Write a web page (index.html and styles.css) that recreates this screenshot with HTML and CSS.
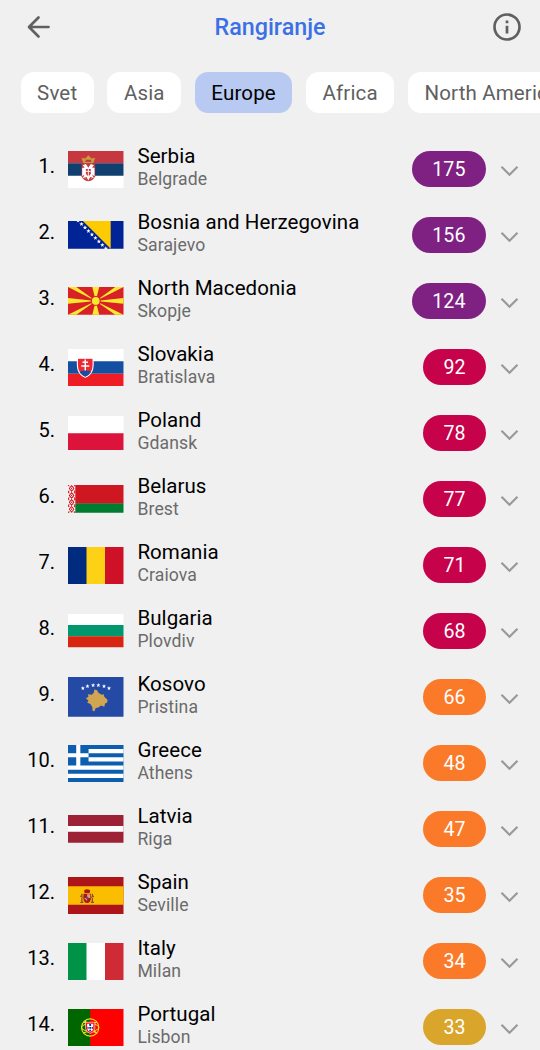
FILE: index.html
```html
<!DOCTYPE html>
<html lang="sr">

<head>
    <meta charset="UTF-8">
    <meta name="viewport" content="width=device-width, initial-scale=1.0">
    <title>Rangiranje</title>
    <link rel="stylesheet" href="styles.css">
</head>

<body>
    <!-- Header -->
    <header>
        <svg class="back" width="24" height="24" viewBox="0 0 24 24">
            <path d="M21.500 12H2.500M11.500 2.500L2 12L11.500 21.500" />
        </svg>
        <h1>Rangiranje</h1>
        <svg class="info" width="28" height="28" viewBox="0 0 28 28">
            <circle cx="14" cy="14" r="12.5" />
            <path d="M14 12.8V20.5M14 7.6V10.2" />
        </svg>
    </header>

    <!-- Continent Tabs -->
    <nav class="tabs">
        <a class="tab">Svet</a>
        <a class="tab">Asia</a>
        <a class="tab active">Europe</a>
        <a class="tab">Africa</a>
        <a class="tab">North America</a>
    </nav>

    <!-- Ranking List, filled by script.js -->
    <main class="ranking" id="ranking"></main>

    <script src="script.js"></script>
</body>

</html>
```

FILE: styles.css
```css
/* Global Styles */
body {
    font-family: Roboto, Arial, sans-serif;
    margin: 0;
    height: 1050px;
    overflow: hidden;
    background-color: #f0f0f0;
    color: #000;
}

/* Header Styles */
header {
    display: flex;
    justify-content: space-between;
    align-items: center;
    height: 53px;
    padding: 0 19px 0 27px;
}

header h1 {
    margin: 0;
    padding-right: 4px;
    font-size: 23.3px;
    font-weight: 500;
    color: #3b70e6;
}

header svg {
    fill: none;
    stroke: #606060;
    stroke-width: 2.7;
}

.back {
    stroke-linecap: round;
    stroke-linejoin: round;
}

/* Continent Tabs */
.tabs {
    display: flex;
    gap: 13.5px;
    padding: 19px 0 0 20.5px;
    overflow: hidden;
}

.tab {
    flex: none;
    height: 41px;
    padding: 0 16.6px;
    border-radius: 13px;
    background: white;
    color: #606060;
    font-size: 20.5px;
    line-height: 42px;
    letter-spacing: 0.15px;
}

.tab.active {
    background: #b8caf1;
    color: #000;
}

/* Ranking List */
.ranking {
    padding-top: 23px;
}

.row {
    display: flex;
    align-items: center;
    height: 66px;
    padding-right: 21px;
}

.place {
    width: 55px;
    padding-bottom: 7px;
    text-align: right;
    font-size: 20px;
}

.flag {
    width: 55.5px;
    margin-left: 13.3px;
}

.country {
    flex: 1;
    margin-left: 13.6px;
    padding-bottom: 4px;
}

.name {
    font-size: 20.5px;
    line-height: 23px;
    letter-spacing: 0.07px;
}

.city {
    color: #6b6b6b;
    font-size: 17.6px;
    line-height: 22px;
    letter-spacing: 0.12px;
}

.score {
    height: 36px;
    margin-bottom: 1px;
    padding: 0 20.6px;
    border-radius: 18px;
    color: white;
    font-size: 19.6px;
    line-height: 37px;
}

.purple {
    background: #7e2182;
}

.red {
    background: #c6024b;
}

.orange {
    background: #fb7a29;
}

.yellow {
    background: #daa52b;
}

.arrow {
    margin: 3px 0 0 14px;
    fill: none;
    stroke: #999;
    stroke-width: 2.2;
}
```

FILE: script.js
```javascript
// Flag artwork: width and height of the viewBox, then the shapes
const flags = {
    serbia: [90, 60, `<path fill="#fff" d="M0 0h90v60H0z"/><path fill="#c73740" d="M0 0h90v20H0z"/><path fill="#113f70" d="M0 20h90v20H0z"/>
        <path fill="#c99a38" d="M25 20l-3-9 6 1 5-5 5 5 6-1-3 9z"/><path fill="#c73740" d="M28 18l1-4h8l1 4z"/>
        <path fill="#c73740" d="M22 20h22v21q-3 7-11 8-8-1-11-8z"/>
        <path fill="#fff" d="M33 27l-4-6-5 2 3 4-4 0v14l4-3-3 6 6-2 3 6 3-6 6 2-3-6 4 3V27h-4l3-4-5-2z"/>
        <path fill="#c73740" d="M29 29h8v7q-1 4-4 5-3-1-4-5z"/><path stroke="#fff" stroke-width="1.5" d="M33 29v12M29 33h8"/>
        <path fill="#c99a38" d="M27 42l3 4-3-1zM39 42l-3 4 3-1z"/>`],
    bosnia: [80, 40, `<path fill="#002395" d="M0 0h80v40H0z"/><path fill="#fecb00" d="M21.5 0H61.5V40z"/>
        ${[0, 1, 2, 3, 4, 5, 6, 7, 8].map(i => star(14.5 + i * 5, -0.5 + i * 5, 3.3, '#fff')).join('')}`],
    macedonia: [80, 40, `<path fill="#d82126" d="M0 0h80v40H0z"/>
        <path fill="#f8e92e" d="M0 0h12l28 20L68 0h12L40 20l40 20H68L40 20 12 40H0l40-20zM35 0h10l-5 20zM35 40h10l-5-20zM0 16v8l40-4zM80 16v8l-40-4z"/>
        <circle cx="40" cy="20" r="6.4" fill="#f8e92e" stroke="#d82126" stroke-width="1.6"/>`],
    slovakia: [90, 60, `<path fill="#fff" d="M0 0h90v60H0z"/><path fill="#1350a1" d="M0 20h90v20H0z"/><path fill="#ee1c25" d="M0 40h90v20H0z"/>
        <path fill="#ee2733" stroke="#fff" stroke-width="1.8" d="M15.5 15h25q1 13-1 19-3 8-11.500 12-8.500-4-11.500-12-2-6-1-19z"/>
        <path fill="#1350a1" d="M19 38q2-4 5-2 4-5 8 0 3-2 5 2-3 4-9 7-6-3-9-7z"/>
        <path stroke="#fff" stroke-width="2.4" d="M28 17v18M23.500 21.500h9M21.500 27.500h13"/>`],
    poland: [80, 50, `<path fill="#fff" d="M0 0h80v25H0z"/><path fill="#dc143c" d="M0 25h80v25H0z"/>`],
    belarus: [80, 40, `<path fill="#ce1720" d="M0 0h80v27H0z"/><path fill="#007c30" d="M0 26.700h80V40H0z"/><path fill="#fff" d="M0 0h10.500v40H0z"/>
        ${[0, 10, 20, 30].map(y => `<path fill="none" stroke="#ce1720" stroke-width="1.500" d="M5.200 ${y + 1}l3.300 4-3.300 4-3.300-4zM0 ${y}l2 2M10.400 ${y}l-2 2M0 ${y + 10}l2-2M10.400 ${y + 10}l-2-2M5.200 ${y + 4}v2"/>`).join('')}`],
    romania: [90, 60, `<path fill="#002b7f" d="M0 0h31v60H0z"/><path fill="#fcd116" d="M30 0h31v60H30z"/><path fill="#ce1126" d="M60 0h30v60H60z"/>`],
    bulgaria: [100, 60, `<path fill="#fff" d="M0 0h100v20H0z"/><path fill="#00966e" d="M0 20h100v20H0z"/><path fill="#d62612" d="M0 40h100v20H0z"/>`],
    kosovo: [84, 60, `<path fill="#244aa5" d="M0 0h84v60H0z"/>
        ${[[22.5, 17], [29.500, 14], [38, 12.5], [46, 12.5], [54.500, 14], [62, 17]].map(p => star(p[0], p[1], 3.3, '#fff')).join('')}
        <path fill="#d0a650" d="M40 19l4 1 2 4 5 3 3-1 1 4 5 5-1 4-3 1-1 5-5-2-4 3-4 1-2 5-3-1 0-5-3-5-5-2 2-3-4-4 4-2-1-4 6 1 3-3z"/>`],
    greece: [81, 54, `<path fill="#0d5eaf" d="M0 0h81v54H0z"/><path stroke="#fff" stroke-width="6" d="M30 9h51M30 21h51M0 33h81M0 45h81M15 0v30M0 15h30"/>`],
    latvia: [80, 40, `<path fill="#9e2235" d="M0 0h80v40H0z"/><path fill="#fff" d="M0 16h80v8H0z"/>`],
    spain: [90, 60, `<path fill="#ad1519" d="M0 0h90v60H0z"/><path fill="#fabd00" d="M0 15h90v30H0z"/>
        <path fill="#ad1519" d="M26 22q5-4 10 0l-1 4h-8zM25 27h12v9q-1 6-6 6t-6-6z"/><path fill="#d9a27a" d="M31 28h5v6h-5zM26 34h5v5z"/>
        <circle cx="31" cy="34" r="2" fill="#5b4a91"/>
        <path fill="none" stroke="#8c4a2c" stroke-width="2" d="M22.500 27v14M39.500 27v14M20 31l5 2M37 33l5-2M20 41h5M37 41h5"/>`],
    italy: [90, 60, `<path fill="#009246" d="M0 0h31v60H0z"/><path fill="#fff" d="M30 0h31v60H30z"/><path fill="#ce2b37" d="M60 0h30v60H60z"/>`],
    portugal: [90, 60, `<path fill="#f00" d="M0 0h90v60H0z"/><path fill="#060" d="M0 0h36v60H0z"/>
        <g fill="none" stroke="#f5e61a" stroke-width="1.700"><circle cx="36" cy="30" r="14"/><ellipse cx="36" cy="30" rx="14" ry="6"/><path d="M25 21q12 6 22 0M25 39q11-6 22 0M27 19l20 21"/></g>
        <path fill="#f00" stroke="#fff" stroke-width="1" d="M28.500 21.500h15v10q-1 7-7.500 8-6.500-1-7.500-8z"/>
        <path fill="#fff" d="M31 24h10v8q-1 4-5 5-4-1-5-5z"/>
        <path fill="#039" d="M34.500 24.500h3v3h-3zM34.500 29h3v3h-3zM34.500 33.500h3v2.500h-3zM31.500 29h2v3h-2zM38.500 29h2v3h-2z"/>`]
};

const countries = [
    ['Serbia', 'Belgrade', 175, 'serbia'],
    ['Bosnia and Herzegovina', 'Sarajevo', 156, 'bosnia'],
    ['North Macedonia', 'Skopje', 124, 'macedonia'],
    ['Slovakia', 'Bratislava', 92, 'slovakia'],
    ['Poland', 'Gdansk', 78, 'poland'],
    ['Belarus', 'Brest', 77, 'belarus'],
    ['Romania', 'Craiova', 71, 'romania'],
    ['Bulgaria', 'Plovdiv', 68, 'bulgaria'],
    ['Kosovo', 'Pristina', 66, 'kosovo'],
    ['Greece', 'Athens', 48, 'greece'],
    ['Latvia', 'Riga', 47, 'latvia'],
    ['Spain', 'Seville', 35, 'spain'],
    ['Italy', 'Milan', 34, 'italy'],
    ['Portugal', 'Lisbon', 33, 'portugal']
];

// Five-pointed star centered on x, y
function star(x, y, r, color) {
    const points = [];
    for (let i = 0; i < 10; i++) {
        const radius = i % 2 ? r * 0.42 : r;
        const angle = Math.PI * (i / 5 - 0.5);
        points.push((x + radius * Math.cos(angle)).toFixed(2) + ',' + (y + radius * Math.sin(angle)).toFixed(2));
    }
    return `<polygon fill="${color}" points="${points.join(' ')}"/>`;
}

// Pill color for a score
function scoreColor(score) {
    if (score > 100) return 'purple';
    if (score > 66) return 'red';
    if (score > 33) return 'orange';
    return 'yellow';
}

// Build one row per country
const ranking = document.getElementById('ranking');

countries.forEach(([name, city, score, flag], index) => {
    const [width, height, shapes] = flags[flag];
    const row = document.createElement('div');
    row.className = 'row';

    row.innerHTML = `
        <div class="place">${index + 1}.</div>
        <svg class="flag" viewBox="0 0 ${width} ${height}">${shapes}</svg>
        <div class="country">
            <div class="name">${name}</div>
            <div class="city">${city}</div>
        </div>
        <div class="score ${scoreColor(score)}">${score}</div>
        <svg class="arrow" width="19" height="12" viewBox="0 0 19 12"><path d="M1.500 1.800L9.500 9.800L17.500 1.800"/></svg>
    `;

    ranking.appendChild(row);
});
```
